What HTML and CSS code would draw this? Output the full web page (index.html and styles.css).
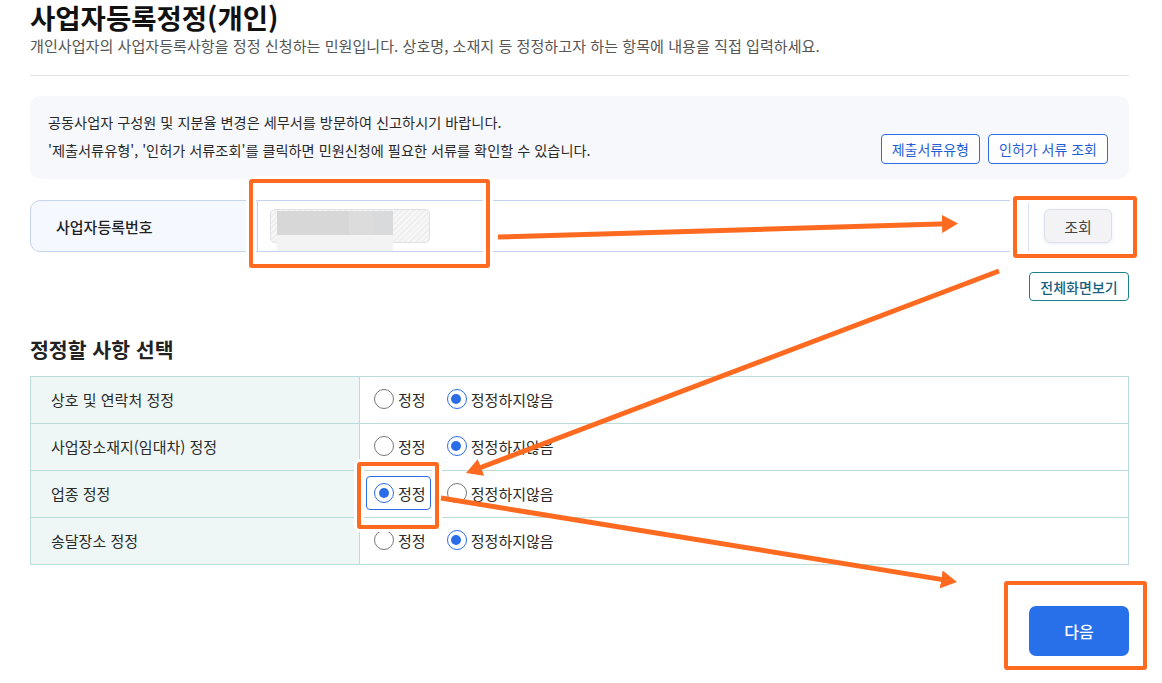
FILE: index.html
```html
<!DOCTYPE html>
<html lang="ko">

<head>
  <meta charset="utf-8">
  <link rel="stylesheet" href="styles.css">
</head>

<body>

  <div class="page">
    <h1 class="title">사업자등록정정(개인)</h1>
    <p class="desc">개인사업자의 사업자등록사항을 정정 신청하는 민원입니다. 상호명, 소재지 등 정정하고자 하는 항목에 내용을 직접 입력하세요.</p>
    <hr class="divider">

    <div class="notice">
      <div class="notice-text">
        <p>공동사업자 구성원 및 지분율 변경은 세무서를 방문하여 신고하시기 바랍니다.</p>
        <p>'제출서류유형', '인허가 서류조회'를 클릭하면 민원신청에 필요한 서류를 확인할 수 있습니다.</p>
      </div>
      <div class="notice-btns">
        <button class="btn-line">제출서류유형</button>
        <button class="btn-line">인허가 서류 조회</button>
      </div>
    </div>

    <div class="biz-row">
      <div class="biz-label">사업자등록번호</div>
      <div class="biz-value">
        <div class="masked-input">
          <span class="redact redact-a"></span>
          <span class="redact redact-b"></span>
          <span class="redact redact-c"></span>
          <span class="redact redact-low"></span>
        </div>
      </div>
      <div class="biz-action">
        <button class="btn-search">조회</button>
      </div>
    </div>

    <div class="tools">
      <button class="btn-teal">전체화면보기</button>
    </div>

    <h2 class="section-title">정정할 사항 선택</h2>

    <table class="select-table">
      <tr>
        <th>상호 및 연락처 정정</th>
        <td>
          <span class="opt"><span class="radio"></span>정정</span>
          <span class="opt"><span class="radio on"></span>정정하지않음</span>
        </td>
      </tr>
      <tr>
        <th>사업장소재지(임대차) 정정</th>
        <td>
          <span class="opt"><span class="radio"></span>정정</span>
          <span class="opt"><span class="radio on"></span>정정하지않음</span>
        </td>
      </tr>
      <tr>
        <th>업종 정정</th>
        <td>
          <span class="opt focus"><span class="radio on"></span>정정</span>
          <span class="opt"><span class="radio"></span>정정하지않음</span>
        </td>
      </tr>
      <tr>
        <th>송달장소 정정</th>
        <td>
          <span class="opt"><span class="radio"></span>정정</span>
          <span class="opt"><span class="radio on"></span>정정하지않음</span>
        </td>
      </tr>
    </table>

    <div class="foot">
      <button class="btn-next">다음</button>
    </div>
  </div>

  <!-- guide marks drawn over the capture -->
  <div class="marks">
    <div class="mark mark-input"></div>
    <div class="mark mark-search"></div>
    <div class="mark mark-radio"></div>
    <div class="mark mark-next"></div>
    <svg class="arrows" width="1162" height="683" viewBox="0 0 1162 683">
      <defs>
        <marker id="head" markerUnits="userSpaceOnUse" markerWidth="17" markerHeight="20" refX="6" refY="10" orient="auto">
          <path d="M0,1 L16,10 L0,19 z" fill="#ff6a21"/>
        </marker>
      </defs>
      <line x1="498" y1="237" x2="948" y2="223.8" marker-end="url(#head)"/>
      <line x1="999" y1="271" x2="475.4" y2="469.5" marker-end="url(#head)"/>
      <line x1="441" y1="498" x2="947.1" y2="580.4" marker-end="url(#head)"/>
    </svg>
  </div>

</body>

</html>
```

FILE: styles.css
```css
* {
  box-sizing: border-box;
}

body {
  margin: 0;
  background: #fff;
  color: #222;
  font-family: "Noto Sans CJK KR", "Noto Sans", sans-serif;
}

.page {
  width: 1162px;
  padding: 1px 33px 0 30px;
}

.title {
  margin: 0;
  font-size: 27.5px;
  line-height: 32px;
  font-weight: 700;
  color: #111;
}

.desc {
  margin: 1px 0 0;
  font-size: 15.1px;
  line-height: 22px;
  color: #555;
}

.divider {
  margin: 19px 0 0;
  border: 0;
  border-top: 1px solid #e3e3e3;
}

.notice {
  display: flex;
  justify-content: space-between;
  align-items: flex-end;
  margin-top: 20px;
  height: 83px;
  padding: 10px 21px 15px 18px;
  background: #f7f8fc;
  border-radius: 10px;
}

.notice-text p {
  margin: 0;
  font-size: 14.2px;
  line-height: 28px;
  color: #2a2a2a;
}

.notice-btns {
  display: flex;
  gap: 8px;
}

.btn-line {
  height: 30px;
  padding: 0 10px;
  border: 1px solid #2b6de6;
  border-radius: 4px;
  background: #fff;
  color: #1f5fd6;
  font-family: inherit;
  font-size: 14px;
}

.biz-row {
  display: flex;
  margin-top: 21px;
  height: 52px;
}

.biz-label {
  display: flex;
  align-items: center;
  width: 228px;
  padding-left: 25px;
  background: #f5f8fe;
  border: 1px solid #c6d4ee;
  border-radius: 10px 0 0 10px;
  font-size: 15px;
  font-weight: 500;
  color: #222;
}

.biz-value {
  flex: 1;
  display: flex;
  align-items: center;
  padding-left: 12px;
  border-top: 1px solid #c6d4ee;
  border-bottom: 1px solid #c6d4ee;
}

.masked-input {
  position: relative;
  width: 160px;
  height: 34px;
  border: 1px solid #e0e0e0;
  border-radius: 5px;
  background: repeating-linear-gradient(135deg, #efefef 0 2px, #f7f7f7 2px 4px);
}

.redact {
  position: absolute;
  top: 1px;
  height: 24px;
}

.redact-a {
  left: 6px;
  width: 72px;
  background: #d7d7d7;
}

.redact-b {
  left: 78px;
  width: 24px;
  background: #dcdcdc;
}

.redact-c {
  left: 102px;
  width: 20px;
  background: #d9dadb;
}

.redact-low {
  left: 6px;
  top: 25px;
  width: 116px;
  height: 16px;
  background: #f3f3f3;
}

.biz-action {
  display: flex;
  align-items: center;
  width: 101px;
  padding-left: 15px;
  border-top: 1px solid #c6d4ee;
  border-bottom: 1px solid #c6d4ee;
  border-left: 1px solid #d9e2f2;
}

.btn-search {
  width: 68px;
  height: 34px;
  border: 1px solid #dde0e8;
  border-radius: 6px;
  background: #f3f3f5;
  box-shadow: 0 1px 4px rgba(80, 120, 220, 0.12);
  color: #444;
  font-family: inherit;
  font-size: 15px;
}

.tools {
  display: flex;
  justify-content: flex-end;
  margin-top: 20px;
}

.btn-teal {
  width: 100px;
  height: 29px;
  padding: 0;
  border: 1px solid #1b7f8c;
  border-radius: 4px;
  background: #fff;
  color: #1c5f7e;
  font-family: inherit;
  font-size: 14px;
  font-weight: 500;
}

.section-title {
  margin: 34px 0 0;
  font-size: 20.5px;
  line-height: 28px;
  font-weight: 700;
  color: #222;
}

.select-table {
  width: 100%;
  margin-top: 13px;
  border-collapse: collapse;
}

.select-table th,
.select-table td {
  height: 47px;
  border: 1px solid #bcdcdc;
  font-size: 15px;
  color: #2a2a2a;
}

.select-table th {
  width: 329px;
  padding: 0 0 2px 20px;
  background: #eef7f5;
  text-align: left;
  font-weight: 400;
}

.select-table td {
  padding: 0 0 2px 6px;
}

.opt {
  display: inline-flex;
  align-items: center;
  gap: 4px;
  height: 34px;
  padding: 0 4px 0 7px;
  margin-right: 4px;
  border: 1px solid transparent;
  border-radius: 4px;
  vertical-align: middle;
}

.opt.focus {
  border-color: #2b6de6;
}

.radio {
  position: relative;
  width: 20px;
  height: 20px;
  border: 1px solid #777;
  border-radius: 50%;
  background: #fff;
}

.radio.on {
  border: 1.5px solid #2b6de6;
}

.radio.on:after {
  content: "";
  position: absolute;
  top: 3.5px;
  left: 3.5px;
  width: 10px;
  height: 10px;
  border-radius: 50%;
  background: #2b6de6;
}

.foot {
  display: flex;
  justify-content: flex-end;
  margin-top: 41px;
}

.btn-next {
  width: 100px;
  height: 50px;
  border: 0;
  border-radius: 7px;
  background: #2770ea;
  color: #fff;
  font-family: inherit;
  font-size: 16px;
  font-weight: 500;
}

.marks {
  position: absolute;
  top: 0;
  left: 0;
  width: 1162px;
  height: 683px;
  pointer-events: none;
}

.mark {
  position: absolute;
  border: 4px solid #ff6a21;
  border-radius: 3px;
  box-shadow: 0 0 0 3px #fff, inset 0 0 0 3px #fff;
}

.mark-input {
  left: 249px;
  top: 179px;
  width: 241px;
  height: 89px;
}

.mark-search {
  left: 1013px;
  top: 196px;
  width: 124px;
  height: 62px;
}

.mark-radio {
  left: 357px;
  top: 462px;
  width: 82px;
  height: 67px;
}

.mark-next {
  left: 1004px;
  top: 581px;
  width: 143px;
  height: 89px;
}

.arrows {
  position: absolute;
  top: 0;
  left: 0;
}

.arrows line {
  stroke: #ff6a21;
  stroke-width: 5;
}
```
